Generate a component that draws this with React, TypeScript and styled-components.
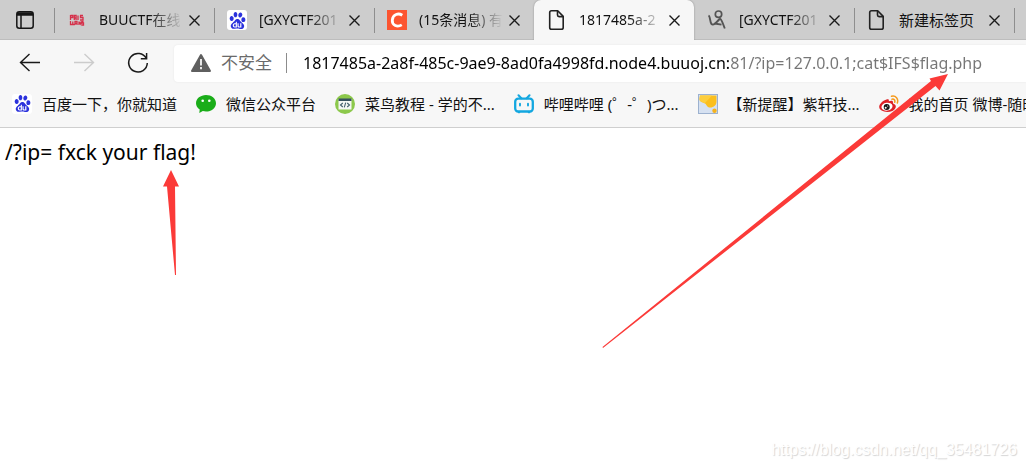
import React from "react";
import styled, { createGlobalStyle } from "styled-components";
import { SiBaidu } from "react-icons/si";

const GlobalStyle = createGlobalStyle`
  * { box-sizing: border-box; }
  html, body { margin: 0; background: #fff; }
  body, button, input {
    font-family: "Noto Sans", "Noto Sans CJK SC", sans-serif;
    color: #111;
  }
  body { overflow-x: hidden; }
  button { border: 0; padding: 0; background: none; }
`;

const Page = styled.div`
  position: relative;
  min-height: 100vh;
  overflow: hidden;
  display: flex;
  flex-direction: column;
`;

const TabStrip = styled.div`
  display: flex;
  height: 40px;
  background: #cdcdcd;
  box-shadow: inset 0 -1px 0 #bdbdbd;
`;

const TabMenu = styled.button`
  flex: none;
  width: 54px;
  padding-right: 4px;
  display: flex;
  align-items: center;
  justify-content: center;
`;

const Tab = styled.div<{ $active?: boolean; $divided?: boolean }>`
  flex: none;
  width: 160px;
  padding: 0 10px 0 12px;
  display: flex;
  align-items: center;
  background: ${(p) => (p.$active ? "#f7f7f7" : "transparent")};
  border-radius: ${(p) => (p.$active ? "7px 7px 0 0" : "0")};
  box-shadow: ${(p) => (p.$active ? "0 0 2px #8a8a8a" : "none")};
  clip-path: ${(p) => (p.$active ? "inset(0 -3px 0 -3px)" : "none")};
  &::before {
    content: "";
    width: 1px;
    height: 25px;
    margin-left: -12px;
    margin-right: 12px;
    background: ${(p) => (p.$divided ? "#8e8e8e" : "transparent")};
  }
`;

const TabButton = styled.button`
  flex: 1;
  min-width: 0;
  height: 30px;
  display: flex;
  align-items: center;
  gap: 12px;
`;

const TabTitle = styled.span<{ $whole?: boolean }>`
  flex: 1;
  min-width: 0;
  font-size: ${(p) => (p.$whole ? 15 : 14)}px;
  line-height: 20px;
  text-align: left;
  white-space: nowrap;
  mask-image: ${(p) =>
    p.$whole ? "none" : "linear-gradient(to right, #000 50px, transparent 84px)"};
`;

const CloseButton = styled.button`
  flex: none;
  width: 20px;
  height: 20px;
  display: grid;
  place-items: center;
`;

const Toolbar = styled.div`
  display: flex;
  align-items: center;
  height: 46px;
  padding-left: 18px;
  background: #f7f7f7;
`;

const NavButton = styled.button`
  flex: none;
  width: 24px;
  height: 24px;
  margin-right: 30px;
  display: grid;
  place-items: center;
`;

const AddressBar = styled.div`
  flex: 1;
  min-width: 0;
  height: 37px;
  margin-left: -6px;
  padding-left: 16px;
  display: flex;
  align-items: center;
  background: #fff;
  border-radius: 4px 0 0 4px;
  box-shadow: 0 0 2px #e4e4e4;
`;

const Security = styled.button`
  flex: none;
  height: 20px;
  display: flex;
  align-items: center;
  gap: 9px;
  padding-right: 14px;
  border-right: 1px solid #8c8c8c;
  color: #6a6a6a;
  font-size: 17px;
  line-height: 20px;
  white-space: nowrap;
`;

const UrlInput = styled.input`
  flex: 1;
  min-width: 0;
  height: 30px;
  margin-left: 16px;
  padding: 0;
  border: 0;
  outline: 0;
  font-size: 16px;
  color: #000;
  background: linear-gradient(to right, #000 427px, #767676 427px);
  background-clip: text;
  -webkit-background-clip: text;
  -webkit-text-fill-color: transparent;
`;

const Bookmarks = styled.nav`
  display: flex;
  gap: 19px;
  height: 42px;
  padding: 0 0 6px 12px;
  align-items: center;
  overflow: hidden;
  background: #f7f7f7;
  border-bottom: 1px solid #cfcfcf;
`;

const Bookmark = styled.a`
  flex: none;
  display: flex;
  align-items: center;
  gap: 10px;
  color: #111;
  font-size: 15px;
  line-height: 20px;
  white-space: pre;
  text-decoration: none;
`;

const Favicon = styled.span`
  flex: none;
  width: 20px;
  height: 20px;
  display: grid;
  place-items: center;
`;

const BaiduTile = styled(Favicon)`
  background: #fff;
  border-radius: 3px;
  color: #2b32dc;
`;

const Content = styled.main`
  padding: 9px 5px;
  font-size: 21px;
  line-height: 30px;
  color: #000;
`;

const Annotations = styled.svg`
  position: absolute;
  left: 0;
  top: 0;
  pointer-events: none;
`;

const Watermark = styled.div`
  position: absolute;
  right: 9px;
  bottom: 8px;
  font: 16px/20px "Liberation Sans", sans-serif;
  color: #fff;
  text-shadow: 1px 1px 1px #d4d4d4;
`;

const Baidu = () => (
  <BaiduTile>
    <SiBaidu size={17} />
  </BaiduTile>
);

const PageIcon = () => (
  <Favicon>
    <svg width="20" height="20" viewBox="0 0 20 20" fill="none" stroke="#222" strokeWidth="1.6" strokeLinejoin="round">
      <path d="M4.5 .8h6.2l5.5 5.6v11q0 1.8-1.8 1.8H4.5q-1.8 0-1.8-1.8V2.600q0-1.800 1.800-1.800z" />
      <path d="M10.500 1v4q0 1.600 1.600 1.600h4" />
    </svg>
  </Favicon>
);

const BuuIcon = () => (
  <Favicon>
    <svg width="20" height="20" viewBox="0 0 20 20" fill="none" stroke="#d5304a" strokeWidth="1.300">
      <path d="M3.500 5v5M3.500 5.500h2.300v2H3.500M7.300 10V5.500h1.800V10M7.300 8h2M11 10V5.500M13 5.500h3M13.500 5.500v2h2.500V10h-3" />
      <path d="M3.500 11v3.500h2.300v-3M5.800 14.500h2M8 15v-3.500h2V15M8 13.300h2M12 11.500V15M12 12l2 2.500v-3M16.500 11.500h-1.500v1.500h1.500V15H15" />
    </svg>
  </Favicon>
);

const CsdnIcon = () => (
  <Favicon>
    <svg width="20" height="20" viewBox="0 0 20 20">
      <path fill="#fc5531" d="M0 0h20v20H0z" />
      <path d="M15.300 5.200C11.500 2.900 5.900 3.900 5.300 10c-.5 5.700 5.200 7.400 9.500 4.900" fill="none" stroke="#fff" strokeWidth="2.800" />
    </svg>
  </Favicon>
);

const BlogIcon = () => (
  <Favicon>
    <svg width="20" height="20" viewBox="0 0 20 20" fill="none" stroke="#545454">
      <circle cx="11.500" cy="4.200" r="3.200" strokeWidth="1.700" />
      <path d="M1.500 5.500c2 1 1.200 6.500 3 8.500 1.800 1.800 5-1.500 8.500-5.500" strokeWidth="1.900" />
      <path d="M13 8.500c2 1.500 3 5.500 4.800 10M7.500 13.500l7 1.200" strokeWidth="1.800" />
    </svg>
  </Favicon>
);

const WechatIcon = () => (
  <Favicon>
    <svg width="20" height="20" viewBox="0 0 20 20">
      <path fill="#1aad19" d="M10 1C4.500 1 0 4.600 0 9.200c0 2.600 1.400 4.800 3.700 6.300L3.300 19l3.500-1.900c1 .3 2.100.4 3.200.4 5.500 0 10-3.600 10-8.300S15.500 1 10 1z" />
      <circle cx="6.700" cy="6.800" r="1.300" fill="#fff" />
      <circle cx="13.300" cy="6.800" r="1.300" fill="#fff" />
    </svg>
  </Favicon>
);

const RunoobIcon = () => (
  <Favicon>
    <svg width="20" height="20" viewBox="0 0 20 20">
      <circle cx="10" cy="10" r="10" fill="#8cc84b" />
      <path fill="#f4f7f4" d="M3.500 5h13v10.500h-13z" />
      <path fill="#36515e" d="M3.500 4.500h13V7h-13z" />
      <path d="M7.800 9l-2.300 2 2.300 2M12.200 9l2.300 2-2.300 2M10.700 8.700l-1.400 4.600" fill="none" stroke="#45616e" strokeWidth="1.100" />
    </svg>
  </Favicon>
);

const BilibiliIcon = () => (
  <Favicon>
    <svg width="20" height="20" viewBox="0 0 20 20" fill="none" stroke="#13a7e0" strokeLinecap="round">
      <rect x="1.200" y="4.700" width="17.600" height="12.800" rx="3" strokeWidth="2.300" />
      <path d="M4.500 1.300l2.800 3M15.500 1.300l-2.800 3" strokeWidth="2" />
      <path d="M6 9.700v1.800M14 9.700v1.800" strokeWidth="1.900" />
      <path d="M4.500 18.600h1M14.500 18.600h1" strokeWidth="1.500" />
    </svg>
  </Favicon>
);

const ForumIcon = () => (
  <Favicon>
    <svg width="20" height="20" viewBox="0 0 20 20">
      <rect x=".5" y=".5" width="19" height="19" fill="#d6e1f1" stroke="#9cb1cf" />
      <path fill="#fbbf1d" d="M2 1.500h16.500v6c0 3.500-2.500 6-6.500 6-3 0-3-2.500-5-4C4 8 1.500 8 1.500 5z" />
      <path fill="#fdce3d" d="M2 1.500h12L7 9C4.500 8 1.500 8 1.500 5z" />
      <circle cx="16.500" cy="16.700" r="2.200" fill="#f5b21b" />
    </svg>
  </Favicon>
);

const WeiboIcon = () => (
  <Favicon>
    <svg width="20" height="20" viewBox="0 0 20 20">
      <path fill="#dd2127" d="M7.500 5.500c1.500-.7 2.800-.3 2.300 1.800 2.300-1 4.500-.8 4.200 1.300-.2.900.2 1 1.100 1.400 3 1.500 2 5.200-1.800 6.900C8 19.200.2 17.400.2 12.800.2 9.800 4.500 6.300 7.500 5.500z" />
      <ellipse cx="8" cy="12.700" rx="5.600" ry="3.900" transform="rotate(-9 8 12.700)" fill="#fff" />
      <circle cx="7.700" cy="13" r="3" fill="#161616" />
      <circle cx="6.700" cy="13.800" r="1" fill="#fff" />
      <circle cx="8.700" cy="12" r=".6" fill="#fff" />
      <path d="M12.500 2.300c4.300-1 7.300 2.600 5.800 6.700M13 5.200c2-.5 3.400 1 2.700 3" fill="none" stroke="#f59a1c" strokeWidth="1.500" strokeLinecap="round" />
    </svg>
  </Favicon>
);

const tabs = [
  { icon: <BuuIcon />, title: "BUUCTF在线", divided: true },
  { icon: <Baidu />, title: "[GXYCTF201", divided: true },
  { icon: <CsdnIcon />, title: "(15条消息) 有", divided: true },
  { icon: <PageIcon />, title: "1817485a-2", active: true },
  { icon: <BlogIcon />, title: "[GXYCTF201" },
  { icon: <PageIcon />, title: "新建标签页", divided: true, whole: true },
];

const bookmarks = [
  { icon: <Baidu />, title: "百度一下，你就知道" },
  { icon: <WechatIcon />, title: "微信公众平台" },
  { icon: <RunoobIcon />, title: "菜鸟教程 - 学的不..." },
  { icon: <BilibiliIcon />, title: "哔哩哔哩 (゜-゜)つ..." },
  { icon: <ForumIcon />, title: "【新提醒】紫轩技..." },
  { icon: <WeiboIcon />, title: "我的首页 微博-随时" },
];

export default function App() {
  return (
    <Page>
      <GlobalStyle />
      <TabStrip>
        <TabMenu aria-label="Tab actions">
          <svg width="18" height="18" viewBox="0 0 18 18" fill="none" stroke="#151515" strokeWidth="1.500">
            <rect x=".8" y=".8" width="16.400" height="16.400" rx="2.500" />
            <path d="M1 3h16" strokeWidth="3.500" />
            <path d="M5 4v13" />
          </svg>
        </TabMenu>
        {tabs.map((t, i) => (
          <Tab key={i} $active={t.active} $divided={t.divided}>
            <TabButton>
              {t.icon}
              <TabTitle $whole={t.whole}>{t.title}</TabTitle>
            </TabButton>
            <CloseButton aria-label="Close tab">
              <svg width="11" height="11" viewBox="0 0 11 11" stroke="#1a1a1a" strokeWidth="1.400">
                <path d="M.5 .5l10 10M10.500 .5l-10 10" />
              </svg>
            </CloseButton>
          </Tab>
        ))}
        <Tab $divided />
      </TabStrip>
      <Toolbar>
        <NavButton aria-label="Back">
          <svg width="22" height="20" viewBox="0 0 22 20" fill="none" stroke="#1a1a1a" strokeWidth="1.400">
            <path d="M21 9.500H1.500M10.500 1l-9 8.500 9 8.500" />
          </svg>
        </NavButton>
        <NavButton aria-label="Forward" disabled>
          <svg width="22" height="20" viewBox="0 0 22 20" fill="none" stroke="#cccccc" strokeWidth="1.400">
            <path d="M1 9.500h19.500M11.500 1l9 8.500-9 8.500" />
          </svg>
        </NavButton>
        <NavButton aria-label="Reload">
          <svg width="22" height="22" viewBox="0 0 22 22" fill="none" stroke="#1a1a1a" strokeWidth="1.500">
            <path d="M19.300 6.500A9.300 9.300 0 1 0 20.300 11M19.600 1v5.800h-5.800" />
          </svg>
        </NavButton>
        <AddressBar>
          <Security>
            <svg width="22" height="20" viewBox="0 0 22 20">
              <path d="M11 2L20 18H2z" fill="#5f5f5f" stroke="#5f5f5f" strokeWidth="2" strokeLinejoin="round" />
              <path d="M11 6v6.500M11 14v2.200" stroke="#fff" strokeWidth="1.700" />
            </svg>
            不安全
          </Security>
          <UrlInput
            aria-label="Address"
            spellCheck={false}
            defaultValue="1817485a-2a8f-485c-9ae9-8ad0fa4998fd.node4.buuoj.cn:81/?ip=127.0.0.1;cat$IFS$flag.php"
          />
        </AddressBar>
      </Toolbar>
      <Bookmarks>
        {bookmarks.map((b) => (
          <Bookmark key={b.title} href="#">
            {b.icon}
            {b.title}
          </Bookmark>
        ))}
      </Bookmarks>
      <Content>/?ip= fxck your flag!</Content>
      <Annotations width="1026" height="400" viewBox="0 0 1026 400" fill="#fb3a38">
        <path d="M171 170l8 16.500h-4L176 275h-1l-8-88.500h-4z" />
        <path d="M948 74l-8.500 16.500-4-4.500L603 348l-.5-1L931 81l-1.500-2.500z" />
      </Annotations>
      <Watermark>https://blog.csdn.net/qq_35481726</Watermark>
    </Page>
  );
}
